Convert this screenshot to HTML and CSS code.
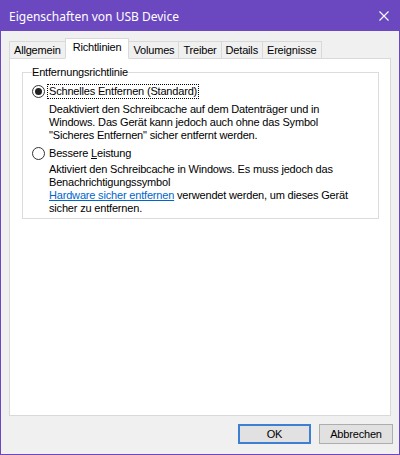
FILE: index.html
```html
<!DOCTYPE html>
<html lang="de">
<head>
<meta charset="utf-8">
<title>Eigenschaften von USB Device</title>
<link rel="stylesheet" href="styles.css">
</head>
<body>
<div class="window">
  <header class="titlebar">
    <span class="title">Eigenschaften von USB Device</span>
    <span class="close" aria-label="Schließen">
      <svg width="10" height="10" viewBox="0 0 10 10"><path d="M0.5 0.5 L9.5 9.5 M9.5 0.5 L0.5 9.5" stroke="#fff" stroke-width="1.1" fill="none"/></svg>
    </span>
  </header>

  <main class="client">
    <nav class="tabs">
      <span class="tab">Allgemein</span>
      <span class="tab active">Richtlinien</span>
      <span class="tab">Volumes</span>
      <span class="tab">Treiber</span>
      <span class="tab">Details</span>
      <span class="tab">Ereignisse</span>
    </nav>

    <section class="panel">
      <fieldset class="group">
        <legend>Entfernungsrichtlinie</legend>

        <label class="option">
          <span class="radio checked"></span>
          <span class="caption focused">Schnelles Entfernen (Standard)</span>
        </label>
        <p class="desc">Deaktiviert den Schreibcache auf dem Datenträger und in<br>Windows. Das Gerät kann jedoch auch ohne das Symbol<br>"Sicheres Entfernen" sicher entfernt werden.</p>

        <label class="option second">
          <span class="radio"></span>
          <span class="caption">Bessere <u>L</u>eistung</span>
        </label>
        <p class="desc">Aktiviert den Schreibcache in Windows. Es muss jedoch das<br>Benachrichtigungssymbol<br><a class="link" href="#">Hardware sicher entfernen</a> verwendet werden, um dieses Gerät<br>sicher zu entfernen.</p>
      </fieldset>
    </section>
  </main>

  <footer class="buttons">
    <button class="btn default">OK</button>
    <button class="btn">Abbrechen</button>
  </footer>
</div>
</body>
</html>
```

FILE: styles.css
```css
html, body {
  margin: 0;
  padding: 0;
  background: #f0f0f0;
}

body {
  font-family: "Liberation Sans", Arial, sans-serif;
  font-size: 11px;
  line-height: 13px;
  letter-spacing: -0.18px;
  color: #000;
}

.window {
  box-sizing: border-box;
  width: 400px;
  height: 455px;
  border: 1px solid #6b48c0;
  background: #f0f0f0;
  display: flex;
  flex-direction: column;
}

/* title bar */
.titlebar {
  height: 30px;
  flex: none;
  background: #6b48c0;
  color: #fff;
  display: flex;
  align-items: center;
  justify-content: space-between;
  padding-left: 8px;
  font-family: "Noto Sans", sans-serif;
  font-size: 12px;
  letter-spacing: 0;
}

.close {
  width: 31px;
  height: 30px;
  display: flex;
  align-items: center;
  justify-content: center;
}

.close svg {
  display: block;
}

/* client area with tab control */
.client {
  flex: 1;
  display: flex;
  flex-direction: column;
  padding: 7px 8px 0 8px;
  min-height: 0;
}

.tabs {
  display: flex;
  align-items: flex-end;
  height: 21px;
  margin-bottom: -1px;
}

.tab {
  box-sizing: border-box;
  height: 18px;
  padding: 0 4px;
  border: 1px solid #d9d9d9;
  background: #f0f0f0;
  line-height: 17px;
  text-align: center;
  white-space: nowrap;
}

.tab + .tab {
  margin-left: -1px;
}

.tab.active {
  position: relative;
  z-index: 1;
  height: 21px;
  padding: 0 7px;
  background: #fff;
  border-bottom-color: #fff;
  line-height: 17px;
}

.panel {
  flex: 1;
  background: #fff;
  border: 1px solid #d9d9d9;
  padding: 7px 11px 0 12px;
}

/* group box */
.group {
  margin: 0;
  border: 1px solid #dcdcdc;
  padding: 6px 8px 3px 9px;
}

.group legend {
  padding: 0;
  line-height: 13px;
}

.option {
  display: flex;
  align-items: center;
  height: 13px;
}

.option.second {
  margin-top: 5px;
}

.radio {
  box-sizing: border-box;
  width: 13px;
  height: 13px;
  border: 1px solid #333;
  border-radius: 50%;
  background: #fff;
  display: flex;
  align-items: center;
  justify-content: center;
  flex: none;
}

.radio.checked::after {
  content: "";
  width: 7px;
  height: 7px;
  border-radius: 50%;
  background: #222;
}

.caption {
  margin-left: 3px;
  padding: 0 1px;
  line-height: 13px;
}

.caption.focused {
  outline: 1px dotted #000;
  outline-offset: 0;
}

.desc {
  margin: 5px 0 0 17px;
}

.option.second + .desc {
  margin-top: 3px;
}

.link {
  color: #0066cc;
  text-decoration: underline;
}

/* dialog buttons */
.buttons {
  flex: none;
  display: flex;
  justify-content: flex-end;
  gap: 8px;
  padding: 8px 6px 10px 0;
}

.btn {
  box-sizing: border-box;
  width: 73px;
  height: 20px;
  margin: 0;
  padding: 0;
  border: 1px solid #adadad;
  background: #e1e1e1;
  font-family: inherit;
  font-size: 11px;
  letter-spacing: inherit;
  color: #000;
}

.btn + .btn {
  width: 74px;
}

.btn.default {
  border: 2px solid #3f7fd3;
}
```
